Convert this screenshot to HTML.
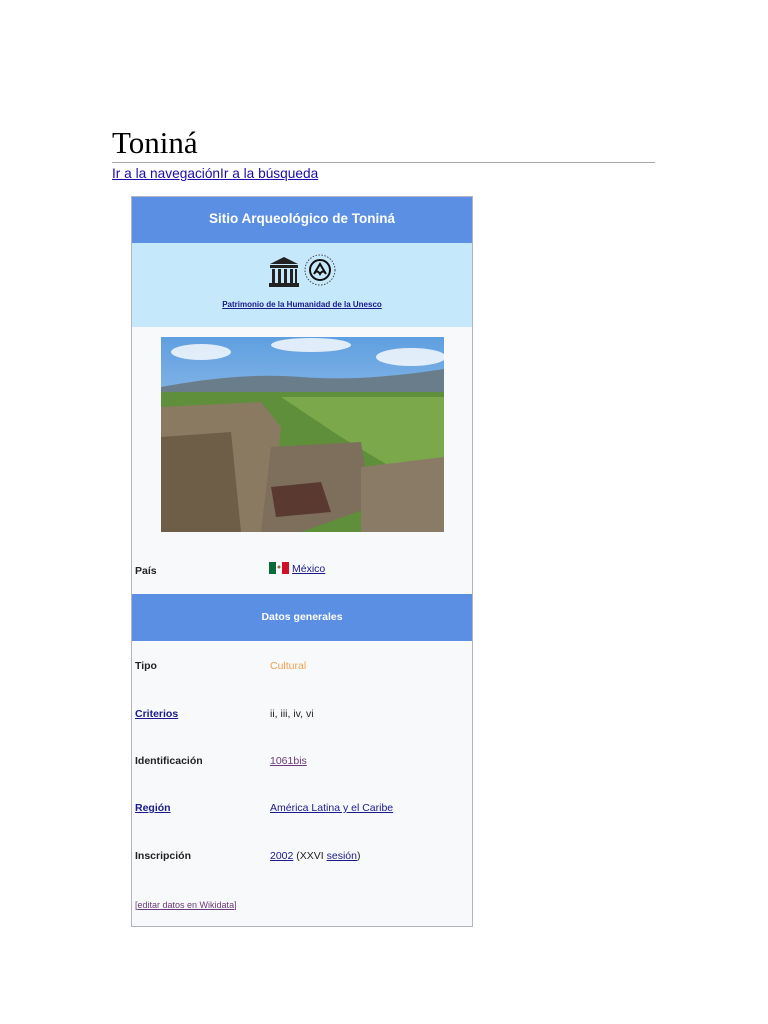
<!DOCTYPE html>
<html><head><meta charset="utf-8"><style>
body{margin:0;background:#fff;width:768px;height:1024px;position:relative;font-family:"Liberation Sans",sans-serif;}
.a{position:absolute}
h1{position:absolute;left:112px;top:125px;margin:0;font:400 31px "Liberation Serif",serif;color:#000}
.hr{position:absolute;left:112px;top:162px;width:543px;height:1px;background:#a8a8a8}
.nav{left:112px;top:166px;font:13.7px "Liberation Sans",sans-serif;color:#1a0dab;text-decoration:underline}
.box{left:131px;top:196px;width:340px;height:729px;border:1px solid #b4b4c0;background:#f8f9fa}
.t{font-size:10.5px;font-weight:bold;color:#222;font-family:"Liberation Sans",sans-serif}
.lk{color:#1a1a8c;text-decoration:underline}
</style></head><body>
<h1>Toniná</h1><div class="hr"></div>
<div class="a nav">Ir a la navegaciónIr a la búsqueda</div>
<div class="a box">
 <div class="a" style="left:0;top:0;width:340px;height:46px;background:#5b8fe3;color:#fff;font:bold 13.5px 'Liberation Sans',sans-serif;text-align:center;line-height:44px">Sitio Arqueológico de Toniná</div>
 <div class="a" style="left:0;top:46px;width:340px;height:84px;background:#c6e8fb"></div>
 <svg class="a" style="left:136px;top:57px" width="72" height="36" viewBox="0 0 72 36">
  <polygon points="2,10 16,3 30,10" fill="#222"/><rect x="2" y="11" width="28" height="3" fill="#222"/>
  <rect x="4" y="15" width="3" height="14" fill="#222"/><rect x="10" y="15" width="3" height="14" fill="#222"/><rect x="16" y="15" width="3" height="14" fill="#222"/><rect x="22" y="15" width="3" height="14" fill="#222"/><rect x="27" y="15" width="2" height="14" fill="#222"/>
  <rect x="1" y="29" width="30" height="4" fill="#222"/>
  <circle cx="52" cy="16" r="15" fill="none" stroke="#444" stroke-width="1" stroke-dasharray="1.5 1.5"/>
  <circle cx="52" cy="16" r="10" fill="none" stroke="#111" stroke-width="2"/>
  <path d="M46 20 L52 10 L58 20 Q55 15 52 20 Q49 15 46 20Z" fill="none" stroke="#111" stroke-width="2"/>
 </svg>
 <div class="a" style="left:0;top:103px;width:340px;text-align:center;font:bold 8px 'Liberation Sans',sans-serif;color:#1a1a8c;text-decoration:underline">Patrimonio de la Humanidad de la Unesco</div>
 <svg class="a" style="left:29px;top:140px" width="283" height="195" viewBox="0 0 283 195">
  <defs><linearGradient id="s" x1="0" y1="0" x2="0" y2="1"><stop offset="0" stop-color="#5f9fe0"/><stop offset="1" stop-color="#cfe2f3"/></linearGradient></defs>
  <rect width="283" height="195" fill="url(#s)"/>
  <ellipse cx="40" cy="15" rx="30" ry="8" fill="#fff" opacity=".8"/><ellipse cx="150" cy="8" rx="40" ry="7" fill="#fff" opacity=".8"/><ellipse cx="250" cy="20" rx="35" ry="9" fill="#fff" opacity=".8"/>
  <path d="M0 50 Q80 35 140 40 T283 32 L283 60 L0 60Z" fill="#6a7d8a"/>
  <rect y="55" width="283" height="140" fill="#5f8f3a"/>
  <path d="M120 60 L283 60 L283 140 L230 130 L180 100Z" fill="#7aa84a"/>
  <path d="M0 70 L100 65 L120 90 L110 195 L0 195Z" fill="#8a7a62"/>
  <path d="M0 100 L70 95 L80 195 L0 195Z" fill="#6e5e48"/>
  <path d="M110 110 L200 105 L210 170 L140 195 L100 195Z" fill="#7d6f5c"/>
  <path d="M200 130 L283 120 L283 195 L200 195Z" fill="#8a7b66"/>
  <path d="M110 150 L160 145 L170 175 L115 180Z" fill="#5a3a30"/>
 </svg>
 <div class="a t" style="left:3px;top:368px">País</div>
 <svg class="a" style="left:137px;top:365px" width="20" height="12"><rect width="7" height="12" fill="#0a6b3b"/><rect x="7" width="6" height="12" fill="#fff"/><rect x="13" width="7" height="12" fill="#ce1126"/><circle cx="10" cy="5" r="1.5" fill="#8a6a3a"/></svg>
 <div class="a t lk" style="left:160px;top:366px;font-weight:normal">México</div>
 <div class="a" style="left:0;top:397px;width:340px;height:47px;background:#5b8fe3;color:#fff;font:bold 10.5px 'Liberation Sans',sans-serif;text-align:center;line-height:47px">Datos generales</div>
 <div class="a t" style="left:3px;top:463px">Tipo</div>
 <div class="a t" style="left:138px;top:463px;color:#f0a050;font-weight:normal">Cultural</div>
 <div class="a t lk" style="left:3px;top:511px">Criterios</div>
 <div class="a t" style="left:138px;top:511px;font-weight:normal">ii, iii, iv, vi</div>
 <div class="a t" style="left:3px;top:558px">Identificación</div>
 <div class="a t" style="left:138px;top:558px;font-weight:normal;color:#6a3a7a;text-decoration:underline">1061bis</div>
 <div class="a t lk" style="left:3px;top:605px">Región</div>
 <div class="a t lk" style="left:138px;top:605px;font-weight:normal">América Latina y el Caribe</div>
 <div class="a t" style="left:3px;top:653px">Inscripción</div>
 <div class="a t" style="left:138px;top:653px;font-weight:normal"><span class="lk">2002</span> (XXVI <span class="lk">sesión</span>)</div>
 <div class="a" style="left:3px;top:703px;font-size:9px;color:#6a3a7a">[<u>editar datos en Wikidata</u>]</div>
</div>
</body></html>
